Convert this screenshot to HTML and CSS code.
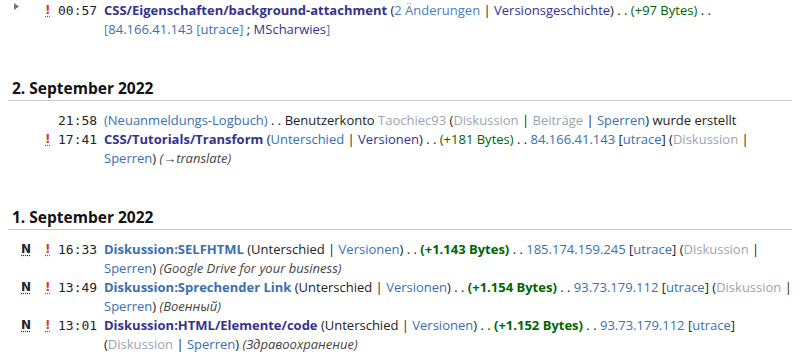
FILE: index.html
```html
<!DOCTYPE html>
<html lang="de">
<head>
<meta charset="utf-8">
<link rel="stylesheet" href="styles.css">
</head>
<body>
<div class="entry first">
  <div class="meta"><span class="arrow"><svg width="5" height="7" viewBox="0 0 5 7"><path d="M0 0 L5 3.5 L0 7 Z" fill="#72777d"/></svg></span><span class="flag-n"></span><abbr class="flag-u">!</abbr><span class="time">00:57</span></div>
  <div class="text"><a class="title visited" href="#">CSS/Eigenschaften/background-attachment</a> (<a href="#" class="light">2 Änderungen</a> | <a href="#" class="visited">Versionsgeschichte</a>) . . <span class="pos">(+97 Bytes)</span> . . <span class="by">[<a href="#">84.166.41.143</a> [<a href="#">utrace</a>]</span> ; <a href="#" class="visited">MScharwies</a><span class="by">]</span></div>
</div>

<h2 class="day">2. September 2022</h2>
<div class="entry">
  <div class="meta"><span class="arrow"></span><span class="flag-n"></span><span class="flag-u"></span><span class="time">21:58</span></div>
  <div class="text"><a href="#">(Neuanmeldungs-Logbuch)</a> . . Benutzerkonto <a href="#" class="new">Taochiec93</a> (<a href="#" class="new">Diskussion</a> | <a href="#" class="new">Beiträge</a> | <a href="#">Sperren</a>) wurde erstellt</div>
</div>
<div class="entry">
  <div class="meta"><span class="arrow"></span><span class="flag-n"></span><abbr class="flag-u">!</abbr><span class="time">17:41</span></div>
  <div class="text"><a class="title visited" href="#">CSS/Tutorials/Transform</a> (<a href="#">Unterschied</a> | <a href="#" class="visited">Versionen</a>) . . <span class="pos">(+181 Bytes)</span> . . <a href="#">84.166.41.143</a> [<a href="#">utrace</a>] (<a href="#" class="new">Diskussion</a> | <a href="#">Sperren</a>) <span class="comment">(→translate)</span></div>
</div>

<h2 class="day">1. September 2022</h2>
<div class="entry">
  <div class="meta"><span class="arrow"></span><abbr class="flag-n">N</abbr><abbr class="flag-u">!</abbr><span class="time">16:33</span></div>
  <div class="text"><a class="title" href="#">Diskussion:SELFHTML</a> (Unterschied | <a href="#">Versionen</a>) . . <span class="pos big">(+1.143 Bytes)</span> . . <a href="#">185.174.159.245</a> [<a href="#">utrace</a>] (<a href="#" class="new">Diskussion</a> | <a href="#">Sperren</a>) <span class="comment">(Google Drive for your business)</span></div>
</div>
<div class="entry">
  <div class="meta"><span class="arrow"></span><abbr class="flag-n">N</abbr><abbr class="flag-u">!</abbr><span class="time">13:49</span></div>
  <div class="text"><a class="title" href="#">Diskussion:Sprechender Link</a> (Unterschied | <a href="#">Versionen</a>) . . <span class="pos big">(+1.154 Bytes)</span> . . <a href="#">93.73.179.112</a> [<a href="#">utrace</a>] (<a href="#" class="new">Diskussion</a> | <a href="#">Sperren</a>) <span class="comment">(Военный)</span></div>
</div>
<div class="entry">
  <div class="meta"><span class="arrow"></span><abbr class="flag-n">N</abbr><abbr class="flag-u">!</abbr><span class="time">13:01</span></div>
  <div class="text"><a class="title visited" href="#">Diskussion:HTML/Elemente/code</a> (Unterschied | <a href="#">Versionen</a>) . . <span class="pos big">(+1.152 Bytes)</span> . . <a href="#">93.73.179.112</a> [<a href="#">utrace</a>] (<a href="#" class="new">Diskussion</a> | <a href="#">Sperren</a>) <span class="comment">(Здравоохранение)</span></div>
</div>
</body>
</html>
```

FILE: styles.css
```css
html, body {
  background: #fff;
}
body {
  margin: 0 8px;
  padding-top: 1px;
  font-family: "Open Sans", "Noto Sans", sans-serif;
  font-size: 13px;
  color: #222;
}
a {
  color: #3a6fb0;
  text-decoration: none;
}
a.visited {
  color: #35328c;
}
a.new {
  color: #9aa4ae;
}
a.light {
  color: #4a80bd;
}
a.title {
  font-weight: bold;
}
.by {
  color: #5b7fa8;
}
.entry {
  display: flex;
  line-height: 19px;
}
.meta {
  flex: 0 0 89px;
  display: flex;
  align-items: flex-start;
}
.arrow {
  display: flex;
  width: 13px;
  padding: 2px 0 0 6px;
  box-sizing: border-box;
  line-height: 0;
}
.flag-n, .flag-u {
  display: inline-block;
  font-weight: bold;
  text-decoration: underline dotted;
  text-underline-offset: 2px;
  font-family: "DejaVu Sans", sans-serif;
  font-size: 12px;
}
.flag-n {
  width: 24px;
  color: #222;
}
.flag-u {
  width: 13px;
  color: #d33;
}
.time {
  font-family: "DejaVu Sans Mono", monospace;
  font-size: 13px;
  color: #222;
  width: 39px;
}
.text {
  flex: 1;
  min-width: 0;
  padding-left: 7px;
}
.pos {
  color: #006400;
}
.pos.big {
  font-weight: bold;
}
.comment {
  font-style: italic;
  color: #444;
}
.day {
  margin: 38px 0 10px;
  padding-left: 4px;
  font-size: 15.5px;
  line-height: 23px;
  font-weight: bold;
  color: #111;
  border-bottom: 1px solid #c8ccd1;
}
```
